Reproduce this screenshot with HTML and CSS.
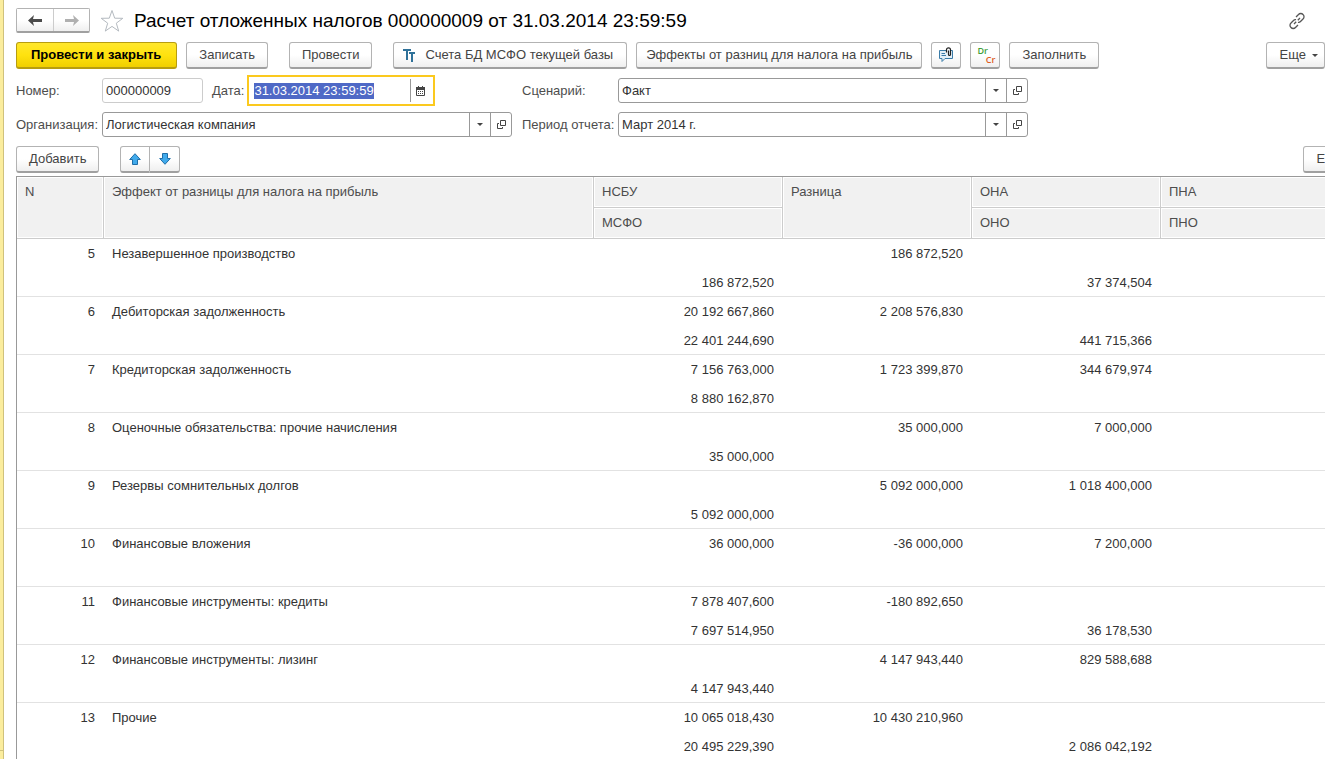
FILE: index.html
```html
<!DOCTYPE html>
<html lang="ru">
<head>
<meta charset="utf-8">
<title>Расчет отложенных налогов</title>
<link rel="stylesheet" href="styles.css">
</head>
<body>
<div class="app">
  <aside class="rail"><div class="rail-foot"></div></aside>
  <main class="form">
    <header class="titlebar">
      <div class="nav">
        <button class="nav-btn" type="button" aria-label="Назад"><svg width="15" height="11" viewBox="0 0 15 11"><path d="M0 5.500L6 0L5 4H14v3H5L6 11z" fill="#4a4a4a"/></svg></button>
        <button class="nav-btn" type="button" aria-label="Вперед"><svg width="15" height="11" viewBox="0 0 15 11"><path d="M15 5.500L9 0L10 4H1v3H10L9 11z" fill="#b0b0b0"/></svg></button>
      </div>
      <button class="plain" type="button" aria-label="В избранное"><svg width="24" height="24" viewBox="0 0 24 24"><path d="M12 1.500l2.700 7.700 8.100.1-6.500 4.900 2.400 7.900-6.700-4.700-6.700 4.700 2.400-7.900L1.200 9.300l8.100-.1z" fill="#fff" stroke="#b4bac0"/></svg></button>
      <h1 class="title">Расчет отложенных налогов 000000009 от 31.03.2014 23:59:59</h1>
      <button class="plain link" type="button" aria-label="Ссылка"><svg width="18" height="18" viewBox="0 0 18 18" fill="none" stroke="#555" stroke-width="1.300"><path d="M8 5L10.500 2.500a3 3 0 0 1 4.500 0a3 3 0 0 1 0 4.500L12.500 9.500a2.600 2.600 0 0 1-2.500.8M10 13L7.500 15.500a3 3 0 0 1-4.500 0a3 3 0 0 1 0-4.500L5.500 8.500a2.600 2.600 0 0 1 2.500-.8M6 12l2.200-2.200M9.800 8.200l2.200-2.200"/></svg></button>
    </header>

    <div class="toolbar">
      <button class="btn primary" type="button">Провести и закрыть</button>
      <button class="btn" type="button">Записать</button>
      <button class="btn apart" type="button">Провести</button>
      <button class="btn apart with-icon" type="button"><svg width="14" height="14" viewBox="0 0 14 14" fill="none" stroke="#2f7199" stroke-width="2"><path d="M1 2h8M5 2v10M7 5h6M10 5v9"/></svg>Счета БД МСФО текущей базы</button>
      <button class="btn wide" type="button">Эффекты от разниц для налога на прибыль</button>
      <button class="btn icon" type="button" aria-label="Обсуждение"><svg width="14" height="16" viewBox="0 0 14 16" fill="none"><path d="M7 3.500H.5v8H3v3l3-3h7.500v-8H12" fill="#e4f0f8" stroke="#3b7ca8"/><path d="M2.500 6.500H6M2.500 8.500H7" stroke="#3b7ca8"/><path d="M7.500 5.500V2.800a2 2 0 0 1 4 0V7.500a1 1 0 0 1-2 0V3.500" stroke="#222" stroke-width="1.200"/></svg></button>
      <button class="btn icon drcr" type="button" aria-label="Проводки"><span class="dr">Dr</span><span class="cr">Cr</span></button>
      <button class="btn" type="button">Заполнить</button>
      <button class="btn more" type="button">Еще<span class="caret"></span></button>
    </div>

    <div class="fields">
      <label for="num">Номер:</label>
      <div class="pair">
        <input class="box number" id="num" value="000000009">
        <label for="date">Дата:</label>
        <div class="date">
          <input id="date" value="31.03.2014 23:59:59" autofocus>
          <button type="button" aria-label="Календарь"><svg width="9" height="10" viewBox="0 0 9 10"><path d="M0 1h9v3H0zM2 0h1v1H2zM6 0h1v1H6z" fill="#444"/><path d="M.5 1.500h8v8h-8z" fill="none" stroke="#444"/><path d="M2 5h1v1H2zM4 5h1v1H4zM6 5h1v1H6zM2 7h1v1H2zM4 7h1v1H4zM6 7h1v1H6z" fill="#444"/></svg></button>
        </div>
      </div>
      <label class="second" for="scn">Сценарий:</label>
      <div class="box combo"><div class="pick"><select id="scn"><option>Факт</option></select><span class="caret"></span></div><button type="button" aria-label="Открыть сценарий"><svg width="9" height="9" viewBox="0 0 9 9" fill="none" stroke="#444"><path d="M3.500.5h5v5h-5zM2 3.500H.5v5h5V7"/></svg></button></div>

      <label for="org">Организация:</label>
      <div class="box combo"><div class="pick"><select id="org"><option>Логистическая компания</option></select><span class="caret"></span></div><button type="button" aria-label="Открыть организацию"><svg width="9" height="9" viewBox="0 0 9 9" fill="none" stroke="#444"><path d="M3.500.5h5v5h-5zM2 3.500H.5v5h5V7"/></svg></button></div>
      <label class="second" for="per">Период отчета:</label>
      <div class="box combo"><div class="pick"><select id="per"><option>Март 2014 г.</option></select><span class="caret"></span></div><button type="button" aria-label="Открыть период"><svg width="9" height="9" viewBox="0 0 9 9" fill="none" stroke="#444"><path d="M3.500.5h5v5h-5zM2 3.500H.5v5h5V7"/></svg></button></div>
    </div>

    <section class="list">
      <div class="toolbar list-bar">
        <button class="btn" type="button">Добавить</button>
        <div class="moves">
          <button class="btn" type="button" aria-label="Вверх"><svg width="12" height="12" viewBox="0 0 12 12"><path d="M6 .7L11.300 6.500H8.500v5h-5v-5H.7z" fill="#41aaeb" stroke="#1f6ea8"/></svg></button>
          <button class="btn" type="button" aria-label="Вниз"><svg width="12" height="12" viewBox="0 0 12 12"><path d="M6 11.300L.7 5.500h2.800v-5h5v5h2.800z" fill="#41aaeb" stroke="#1f6ea8"/></svg></button>
        </div>
        <button class="btn more" type="button">Еще<span class="caret"></span></button>
      </div>
      <table class="grid">
        <colgroup><col class="c-n"><col><col class="c-sum"><col class="c-sum"><col class="c-sum"><col class="c-sum"></colgroup>
        <thead>
          <tr><th rowspan="2">N</th><th rowspan="2">Эффект от разницы для налога на прибыль</th><th>НСБУ</th><th rowspan="2">Разница</th><th>ОНА</th><th>ПНА</th></tr>
          <tr><th>МСФО</th><th>ОНО</th><th>ПНО</th></tr>
        </thead>
        <tbody><tr><td rowspan="2">5</td><td class="name" rowspan="2">Незавершенное производство</td><td></td><td rowspan="2">186 872,520</td><td></td><td></td></tr>
          <tr><td>186 872,520</td><td>37 374,504</td><td></td></tr></tbody>
        <tbody><tr><td rowspan="2">6</td><td class="name" rowspan="2">Дебиторская задолженность</td><td>20 192 667,860</td><td rowspan="2">2 208 576,830</td><td></td><td></td></tr>
          <tr><td>22 401 244,690</td><td>441 715,366</td><td></td></tr></tbody>
        <tbody><tr><td rowspan="2">7</td><td class="name" rowspan="2">Кредиторская задолженность</td><td>7 156 763,000</td><td rowspan="2">1 723 399,870</td><td>344 679,974</td><td></td></tr>
          <tr><td>8 880 162,870</td><td></td><td></td></tr></tbody>
        <tbody><tr><td rowspan="2">8</td><td class="name" rowspan="2">Оценочные обязательства: прочие начисления</td><td></td><td rowspan="2">35 000,000</td><td>7 000,000</td><td></td></tr>
          <tr><td>35 000,000</td><td></td><td></td></tr></tbody>
        <tbody><tr><td rowspan="2">9</td><td class="name" rowspan="2">Резервы сомнительных долгов</td><td></td><td rowspan="2">5 092 000,000</td><td>1 018 400,000</td><td></td></tr>
          <tr><td>5 092 000,000</td><td></td><td></td></tr></tbody>
        <tbody><tr><td rowspan="2">10</td><td class="name" rowspan="2">Финансовые вложения</td><td>36 000,000</td><td rowspan="2">-36 000,000</td><td>7 200,000</td><td></td></tr>
          <tr><td></td><td></td><td></td></tr></tbody>
        <tbody><tr><td rowspan="2">11</td><td class="name" rowspan="2">Финансовые инструменты: кредиты</td><td>7 878 407,600</td><td rowspan="2">-180 892,650</td><td></td><td></td></tr>
          <tr><td>7 697 514,950</td><td>36 178,530</td><td></td></tr></tbody>
        <tbody><tr><td rowspan="2">12</td><td class="name" rowspan="2">Финансовые инструменты: лизинг</td><td></td><td rowspan="2">4 147 943,440</td><td>829 588,688</td><td></td></tr>
          <tr><td>4 147 943,440</td><td></td><td></td></tr></tbody>
        <tbody><tr><td rowspan="2">13</td><td class="name" rowspan="2">Прочие</td><td>10 065 018,430</td><td rowspan="2">10 430 210,960</td><td></td><td></td></tr>
          <tr><td>20 495 229,390</td><td>2 086 042,192</td><td></td></tr></tbody>
      </table>
    </section>
  </main>
</div>
<script src="main.js"></script>
</body>
</html>
```
FILE: styles.css
```css
* { box-sizing: border-box; }
body {
  margin: 0;
  background: #fff;
  color: #333;
  font: 13px/16px "Liberation Sans", Arial, sans-serif;
}
button, input, select { font: inherit; color: inherit; margin: 0; }
svg { display: block; flex: none; }

.app { display: flex; height: 100vh; overflow: hidden; }
.rail {
  flex: none;
  display: flex;
  align-items: flex-end;
  width: 4px;
  background: #fbed9e;
  border-right: 1px solid #d0c27c;
}
.rail-foot { width: 100%; height: 9px; border-top: 1px solid #d0c27c; }
.form { flex: 1; min-width: 0; padding: 8px 0 0 12px; }

.titlebar { display: flex; align-items: center; height: 25px; }
.nav { display: flex; height: 25px; border: 1px solid #b3b3b3; border-bottom: 2px solid #a0a0a0; border-radius: 2px; }
.nav-btn {
  display: flex; align-items: center; justify-content: center;
  width: 36px; padding: 0; border: 0;
  background: linear-gradient(#fff 50%, #efefef);
}
.nav-btn + .nav-btn { border-left: 1px solid #ccc; }
.plain { padding: 0; border: 0; background: none; margin-left: 10px; }
.title { margin: 0 0 0 10px; font-size: 19px; line-height: 24px; font-weight: 400; color: #000; white-space: nowrap; }
.link { margin: 0 19px 0 auto; }

.toolbar { display: flex; align-items: center; gap: 9px; margin-top: 9px; }
.btn {
  display: flex; align-items: center; justify-content: center;
  flex: none;
  height: 27px;
  padding: 0 12px;
  border: 1px solid #b3b3b3;
  border-bottom: 2px solid #a0a0a0;
  border-radius: 3px;
  background: linear-gradient(#fff 50%, #efefef);
  color: #444;
  white-space: nowrap;
}
.btn.primary { padding: 0 15px 0 14px; border-color: #b79d10; background: linear-gradient(#ffe72d, #ffe20f 50%, #f0cf00); color: #000; font-weight: 700; }
.btn.apart { margin-left: 12px; }
.btn.with-icon { gap: 9px; padding: 0 13px 0 8px; }
.btn.wide { padding: 0 9px; }
.btn.icon { width: 30px; padding: 0; }
.btn.more { margin-left: auto; padding: 0 6px 0 13px; gap: 6px; }
.btn.drcr { flex-direction: column; align-items: stretch; padding: 0 4px 0 6px; font: 600 9px/9px "Open Sans", sans-serif; }
.dr { color: #3f9e3a; text-align: left; }
.cr { color: #dd5a22; text-align: right; }
.caret { width: 0; height: 0; border: 3px solid transparent; border-top-color: #444; border-bottom: 0; }

.fields {
  display: grid;
  grid-template-columns: 86px 410px 106px 410px;
  row-gap: 9px;
  align-items: center;
  margin-top: 9px;
}
.fields label { color: #4d4d4d; white-space: nowrap; }
.fields .second { padding-left: 10px; }
.box { height: 25px; border: 1px solid #999; border-radius: 3px; background: #fff; }
.pair { display: flex; align-items: center; height: 25px; }
.number { width: 101px; padding: 0 3px; border-color: #ccc; margin-right: 9px; }
.date { display: flex; align-items: center; width: 188px; height: 31px; margin-left: 3px; border: 2px solid #fbc91e; background: #fff; }
.date input { flex: 1; min-width: 0; padding: 0 5px; border: 0; outline: 0; background: none; }
.date input::selection { background: #4f69c6; color: #fff; }
.date button, .combo button {
  display: flex; align-items: center; justify-content: center;
  flex: none; height: 23px; padding: 0; border: 0; border-left: 1px solid #999; background: none;
}
.date button { width: 23px; padding-right: 3px; }
.combo button { width: 21px; }
.combo { display: flex; }
.pick { position: relative; flex: 1; display: flex; }
.pick select { flex: 1; appearance: none; padding: 0 24px 0 3px; border: 0; outline: 0; background: linear-gradient(#999, #999) right 20px top / 1px 100% no-repeat; }
.pick .caret { position: absolute; right: 7px; top: 10px; pointer-events: none; }

.list { width: calc(100% + 37px); }
.list-bar .moves { display: flex; margin-left: 12px; }
.moves .btn { width: 30px; padding: 0; border-radius: 3px 0 0 3px; }
.moves .btn + .btn { border-left: 0; border-radius: 0 3px 3px 0; }
.grid {
  width: calc(100% - 12px);
  margin-top: 3px;
  table-layout: fixed;
  border-collapse: separate;
  border-spacing: 0;
  border-top: 1px solid #999;
  border-left: 1px solid #999;
}
.c-n { width: 87px; }
.c-sum { width: 189px; }
.grid th {
  height: 31px;
  padding: 7px 8px;
  border-right: 1px solid #ccc;
  border-bottom: 1px solid #ccc;
  background: #f1f1f1;
  box-shadow: inset 0 0 0 1px #fff;
  color: #4d4d4d;
  font-weight: 400;
  text-align: left;
  vertical-align: top;
}
.grid td { height: 29px; padding: 7px 9px 5px 8px; text-align: right; vertical-align: top; white-space: nowrap; }
.grid td.name { text-align: left; }
.grid td[rowspan], .grid tr + tr td { border-bottom: 1px solid #e2e2e2; }
```
FILE: main.js
```js
const dateInput = document.getElementById('date');
dateInput.focus();
dateInput.select();
```
